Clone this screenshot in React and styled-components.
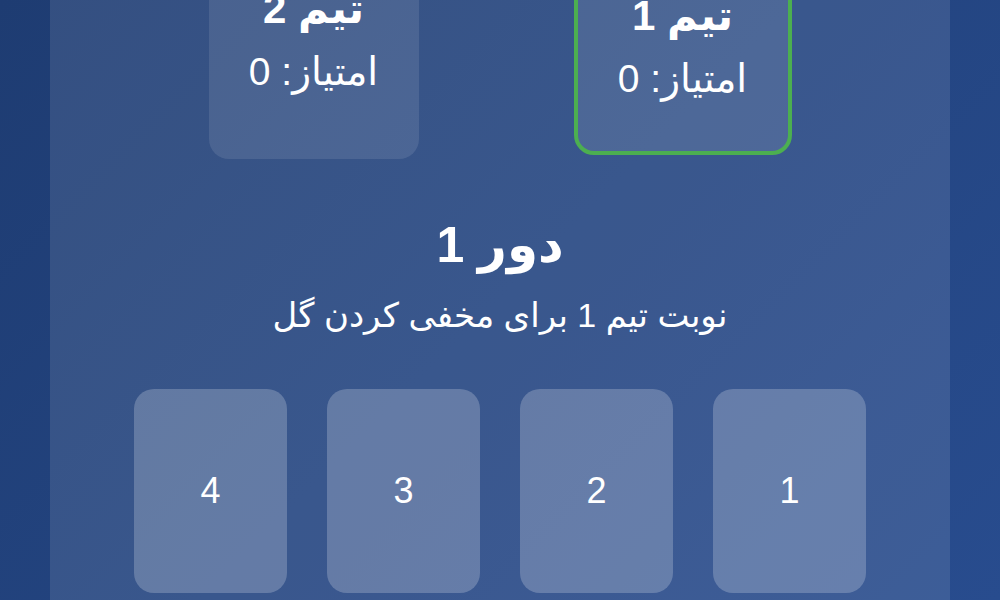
import React from 'react';
import styled, { createGlobalStyle } from 'styled-components';

const GlobalStyle = createGlobalStyle`
  * {
    box-sizing: border-box;
  }
  html,
  body {
    margin: 0;
    padding: 0;
    overflow: hidden;
  }
  body {
    min-height: 100vh;
    background: linear-gradient(135deg, #1e3c72 0%, #284c8e 100%);
    font-family: 'Liberation Sans', 'DejaVu Sans', sans-serif;
    color: #fff;
  }
`;

const teams = [
  { id: 1, name: 'تیم 1', score: 0 },
  { id: 2, name: 'تیم 2', score: 0 },
];

const cards = [1, 2, 3, 4];

const App = () => {
  const activeTeam = 1;
  const round = 1;

  return (
    <>
      <GlobalStyle />
      <Page dir="rtl">
        <Panel>
          <TeamsRow>
            {teams.map((team) => (
              <TeamCard key={team.id} $active={team.id === activeTeam}>
                <TeamName>{team.name}</TeamName>
                <TeamScore>امتیاز: {team.score}</TeamScore>
              </TeamCard>
            ))}
          </TeamsRow>

          <RoundInfo>
            <RoundTitle>دور {round}</RoundTitle>
            <RoundHint>نوبت تیم {activeTeam} برای مخفی کردن گل</RoundHint>
          </RoundInfo>

          <CardsRow>
            {cards.map((n) => (
              <HandCard key={n}>{n}</HandCard>
            ))}
          </CardsRow>
        </Panel>
      </Page>
    </>
  );
};

const Page = styled.div`
  display: flex;
  justify-content: center;
  height: 600px;
`;

const Panel = styled.main`
  width: 900px;
  margin-top: -75px;
  padding: 40px 0 80px;
  background: rgba(255, 255, 255, 0.1);
  display: flex;
  flex-direction: column;
  align-items: center;
`;

const TeamsRow = styled.div`
  display: flex;
  align-items: flex-start;
  justify-content: center;
  gap: 155px;
`;

const TeamCard = styled.div`
  width: ${({ $active }) => ($active ? '218px' : '210px')};
  padding: ${({ $active }) => ($active ? '23px 8px 48px' : '20px 8px 63px')};
  border-radius: 20px;
  background: rgba(255, 255, 255, 0.1);
  border: ${({ $active }) => ($active ? '4px solid #4caf50' : 'none')};
  display: flex;
  flex-direction: column;
  align-items: center;
  gap: 15px;
`;

const TeamName = styled.h3`
  margin: 0;
  font-size: 42px;
  line-height: 48px;
  font-weight: 700;
`;

const TeamScore = styled.p`
  margin: 0;
  font-size: 39px;
  line-height: 48px;
`;

const RoundInfo = styled.section`
  margin-top: 58px;
  display: flex;
  flex-direction: column;
  align-items: center;
  gap: 20px;
`;

const RoundTitle = styled.h2`
  margin: 0;
  font-size: 50px;
  line-height: 56px;
  font-weight: 700;
`;

const RoundHint = styled.p`
  margin: 0;
  font-size: 34px;
  line-height: 44px;
`;

const CardsRow = styled.div`
  margin-top: 52px;
  display: flex;
  gap: 40px;
`;

const HandCard = styled.button`
  width: 153px;
  height: 204px;
  border: none;
  border-radius: 20px;
  background: rgba(255, 255, 255, 0.22);
  color: #fff;
  font-family: inherit;
  font-size: 36px;
  display: flex;
  align-items: center;
  justify-content: center;
  cursor: pointer;
  padding: 0;
`;

export default App;
